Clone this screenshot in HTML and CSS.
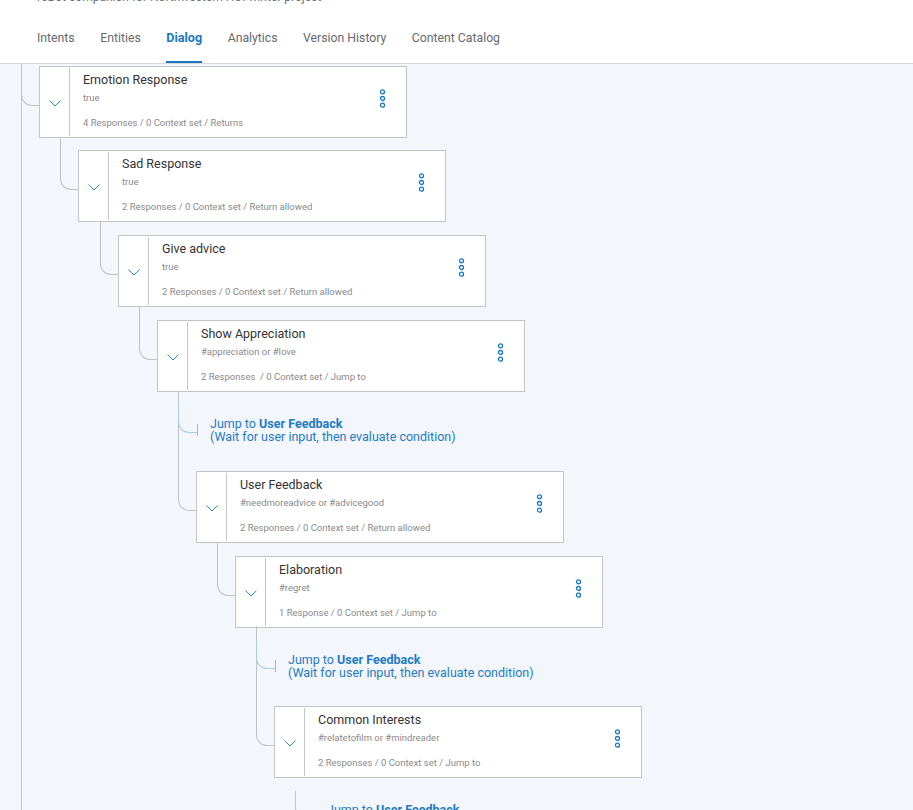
FILE: index.html
```html
<!DOCTYPE html>
<html lang="en">
<head>
<meta charset="utf-8">
<title>Dialog</title>
<link rel="stylesheet" href="styles.css">
</head>
<body>
<header class="top">
  <div class="subtitle">roBot companion for Northwestern HCI winter project</div>
  <nav class="tabs">
    <span class="tab">Intents</span>
    <span class="tab">Entities</span>
    <span class="tab active">Dialog</span>
    <span class="tab">Analytics</span>
    <span class="tab">Version History</span>
    <span class="tab">Content Catalog</span>
  </nav>
</header>
<main class="canvas">
  <div class="tree">

    <div class="node d0">
      <div class="toggle"><svg class="chev" viewBox="0 0 12 7" width="12" height="7"><path d="M0.5 0.5 L6 6 L11.5 0.5"/></svg></div>
      <div class="body">
        <div class="title">Emotion Response</div>
        <div class="cond">true</div>
        <div class="meta">4 Responses / 0 Context set / Returns</div>
      </div>
      <svg class="kebab" viewBox="0 0 7 19" width="7" height="19"><circle cx="3.5" cy="2.8" r="2"/><circle cx="3.5" cy="9.5" r="2"/><circle cx="3.5" cy="16.2" r="2"/></svg>
    </div>

    <div class="node d1">
      <div class="toggle"><svg class="chev" viewBox="0 0 12 7" width="12" height="7"><path d="M0.5 0.5 L6 6 L11.5 0.5"/></svg></div>
      <div class="body">
        <div class="title">Sad Response</div>
        <div class="cond">true</div>
        <div class="meta">2 Responses / 0 Context set / Return allowed</div>
      </div>
      <svg class="kebab" viewBox="0 0 7 19" width="7" height="19"><circle cx="3.5" cy="2.8" r="2"/><circle cx="3.5" cy="9.5" r="2"/><circle cx="3.5" cy="16.2" r="2"/></svg>
    </div>

    <div class="node d2">
      <div class="toggle"><svg class="chev" viewBox="0 0 12 7" width="12" height="7"><path d="M0.5 0.5 L6 6 L11.5 0.5"/></svg></div>
      <div class="body">
        <div class="title">Give advice</div>
        <div class="cond">true</div>
        <div class="meta">2 Responses / 0 Context set / Return allowed</div>
      </div>
      <svg class="kebab" viewBox="0 0 7 19" width="7" height="19"><circle cx="3.5" cy="2.8" r="2"/><circle cx="3.5" cy="9.5" r="2"/><circle cx="3.5" cy="16.2" r="2"/></svg>
    </div>

    <div class="node d3">
      <div class="toggle"><svg class="chev" viewBox="0 0 12 7" width="12" height="7"><path d="M0.5 0.5 L6 6 L11.5 0.5"/></svg></div>
      <div class="body">
        <div class="title">Show Appreciation</div>
        <div class="cond">#appreciation or #love</div>
        <div class="meta">2 Responses &nbsp;/ 0 Context set / Jump to</div>
      </div>
      <svg class="kebab" viewBox="0 0 7 19" width="7" height="19"><circle cx="3.5" cy="2.8" r="2"/><circle cx="3.5" cy="9.5" r="2"/><circle cx="3.5" cy="16.2" r="2"/></svg>
    </div>

    <div class="jump d3">
      <div>Jump to <b>User Feedback</b></div>
      <div>(Wait for user input, then evaluate condition)</div>
    </div>

    <div class="node d4 after-jump">
      <div class="toggle"><svg class="chev" viewBox="0 0 12 7" width="12" height="7"><path d="M0.5 0.5 L6 6 L11.5 0.5"/></svg></div>
      <div class="body">
        <div class="title">User Feedback</div>
        <div class="cond">#needmoreadvice or #advicegood</div>
        <div class="meta">2 Responses / 0 Context set / Return allowed</div>
      </div>
      <svg class="kebab" viewBox="0 0 7 19" width="7" height="19"><circle cx="3.5" cy="2.8" r="2"/><circle cx="3.5" cy="9.5" r="2"/><circle cx="3.5" cy="16.2" r="2"/></svg>
    </div>

    <div class="node d5">
      <div class="toggle"><svg class="chev" viewBox="0 0 12 7" width="12" height="7"><path d="M0.5 0.5 L6 6 L11.5 0.5"/></svg></div>
      <div class="body">
        <div class="title">Elaboration</div>
        <div class="cond">#regret</div>
        <div class="meta">1 Response / 0 Context set / Jump to</div>
      </div>
      <svg class="kebab" viewBox="0 0 7 19" width="7" height="19"><circle cx="3.5" cy="2.8" r="2"/><circle cx="3.5" cy="9.5" r="2"/><circle cx="3.5" cy="16.2" r="2"/></svg>
    </div>

    <div class="jump d5 short">
      <div>Jump to <b>User Feedback</b></div>
      <div>(Wait for user input, then evaluate condition)</div>
    </div>

    <div class="node d6 after-jump">
      <div class="toggle"><svg class="chev" viewBox="0 0 12 7" width="12" height="7"><path d="M0.5 0.5 L6 6 L11.5 0.5"/></svg></div>
      <div class="body">
        <div class="title">Common Interests</div>
        <div class="cond">#relatetofilm or #mindreader</div>
        <div class="meta">2 Responses / 0 Context set / Jump to</div>
      </div>
      <svg class="kebab" viewBox="0 0 7 19" width="7" height="19"><circle cx="3.5" cy="2.8" r="2"/><circle cx="3.5" cy="9.5" r="2"/><circle cx="3.5" cy="16.2" r="2"/></svg>
    </div>

    <div class="jump d6">
      <div>Jump to <b>User Feedback</b></div>
      <div>(Wait for user input, then evaluate condition)</div>
    </div>

  </div>
</main>
</body>
</html>
```

FILE: styles.css
```css
* { box-sizing: border-box; }

html, body {
  margin: 0;
  padding: 0;
  height: 100%;
  overflow: hidden;
}

body {
  font-family: Roboto, "Liberation Sans", Arial, sans-serif;
  background: #f3f6fa;
  color: #333;
}

.top {
  height: 64px;
  background: #fff;
  border-bottom: 1px solid #d8d8d8;
  padding-left: 37px;
  display: flex;
  flex-direction: column;
}

.subtitle {
  font-size: 12px;
  line-height: 14px;
  margin-top: -10px;
  color: #6f7378;
  white-space: nowrap;
}

.tabs {
  display: flex;
  gap: 25.5px;
  margin-top: 26px;
}

.tab {
  font-size: 12.25px;
  line-height: 16px;
  padding-bottom: 15px;
  border-bottom: 2px solid transparent;
  color: #666a6e;
}

.tab.active {
  color: #1879c2;
  font-weight: 700;
  font-size: 12.6px;
  border-bottom-color: #1879c2;
}

.canvas {
  height: calc(100% - 64px);
  overflow: hidden;
  position: relative;
}

.tree {
  margin-left: 21px;
  border-left: 1px solid #c9c9c9;
  min-height: 100%;
  padding-top: 1px;
}

.node {
  position: relative;
  width: 368px;
  height: 72px;
  margin-top: 13px;
  background: #fff;
  border: 1px solid #c4c4c4;
  display: grid;
  grid-template-columns: 30px 1fr auto;
}

.node:first-child { margin-top: 1px; }

.node.d1 { margin-top: 12px; }

.node::before {
  content: "";
  position: absolute;
  left: -19px;
  top: -14px;
  width: 18px;
  height: 52px;
  border-left: 1px solid #c2c2c2;
  border-bottom: 1px solid #c2c2c2;
  border-bottom-left-radius: 11px;
}

.node.after-jump { margin-top: 0; }

.node.after-jump::before {
  top: -81px;
  height: 119px;
}

.d0 { margin-left: 17px; }
.d1 { margin-left: 56px; }
.d2 { margin-left: 96px; }
.d3 { margin-left: 135px; }
.d4 { margin-left: 174px; }
.d5 { margin-left: 213px; }
.d6 { margin-left: 252px; }

.toggle {
  margin: 1px 0;
  border-right: 1px solid #c4c4c4;
  display: flex;
  align-items: center;
  justify-content: center;
  padding-top: 2px;
}

.chev {
  fill: none;
  stroke: #2b8ad6;
  stroke-width: 1;
}

.body {
  padding: 5px 0 0 13px;
  min-width: 0;
}

.title {
  font-size: 12.5px;
  line-height: 16px;
  color: #333;
}

.cond {
  margin-top: 4px;
  font-size: 9.5px;
  line-height: 12px;
  color: #8a8a8a;
}

.meta {
  margin-top: 13px;
  font-size: 9.5px;
  line-height: 12px;
  color: #8a8a8a;
}

.kebab {
  margin: 22px 20px 0 0;
  fill: none;
  stroke: #1879c2;
  stroke-width: 1.3;
}

.jump {
  position: relative;
  height: 79px;
  padding: 25px 0 0 53px;
  font-size: 12.5px;
  line-height: 13px;
  color: #1f7bc4;
  white-space: nowrap;
}

.jump.short { height: 78px; }

.jump b { font-weight: 700; }

.jump::before {
  content: "";
  position: absolute;
  z-index: 1;
  left: 21px;
  top: 13px;
  width: 18px;
  height: 27px;
  border-left: 1px solid #a6cbec;
  border-bottom: 1px solid #a6cbec;
  border-bottom-left-radius: 11px;
}

.jump::after {
  content: "";
  position: absolute;
  left: 40px;
  top: 32px;
  width: 1px;
  height: 12px;
  background: #b4b4b4;
}
```
